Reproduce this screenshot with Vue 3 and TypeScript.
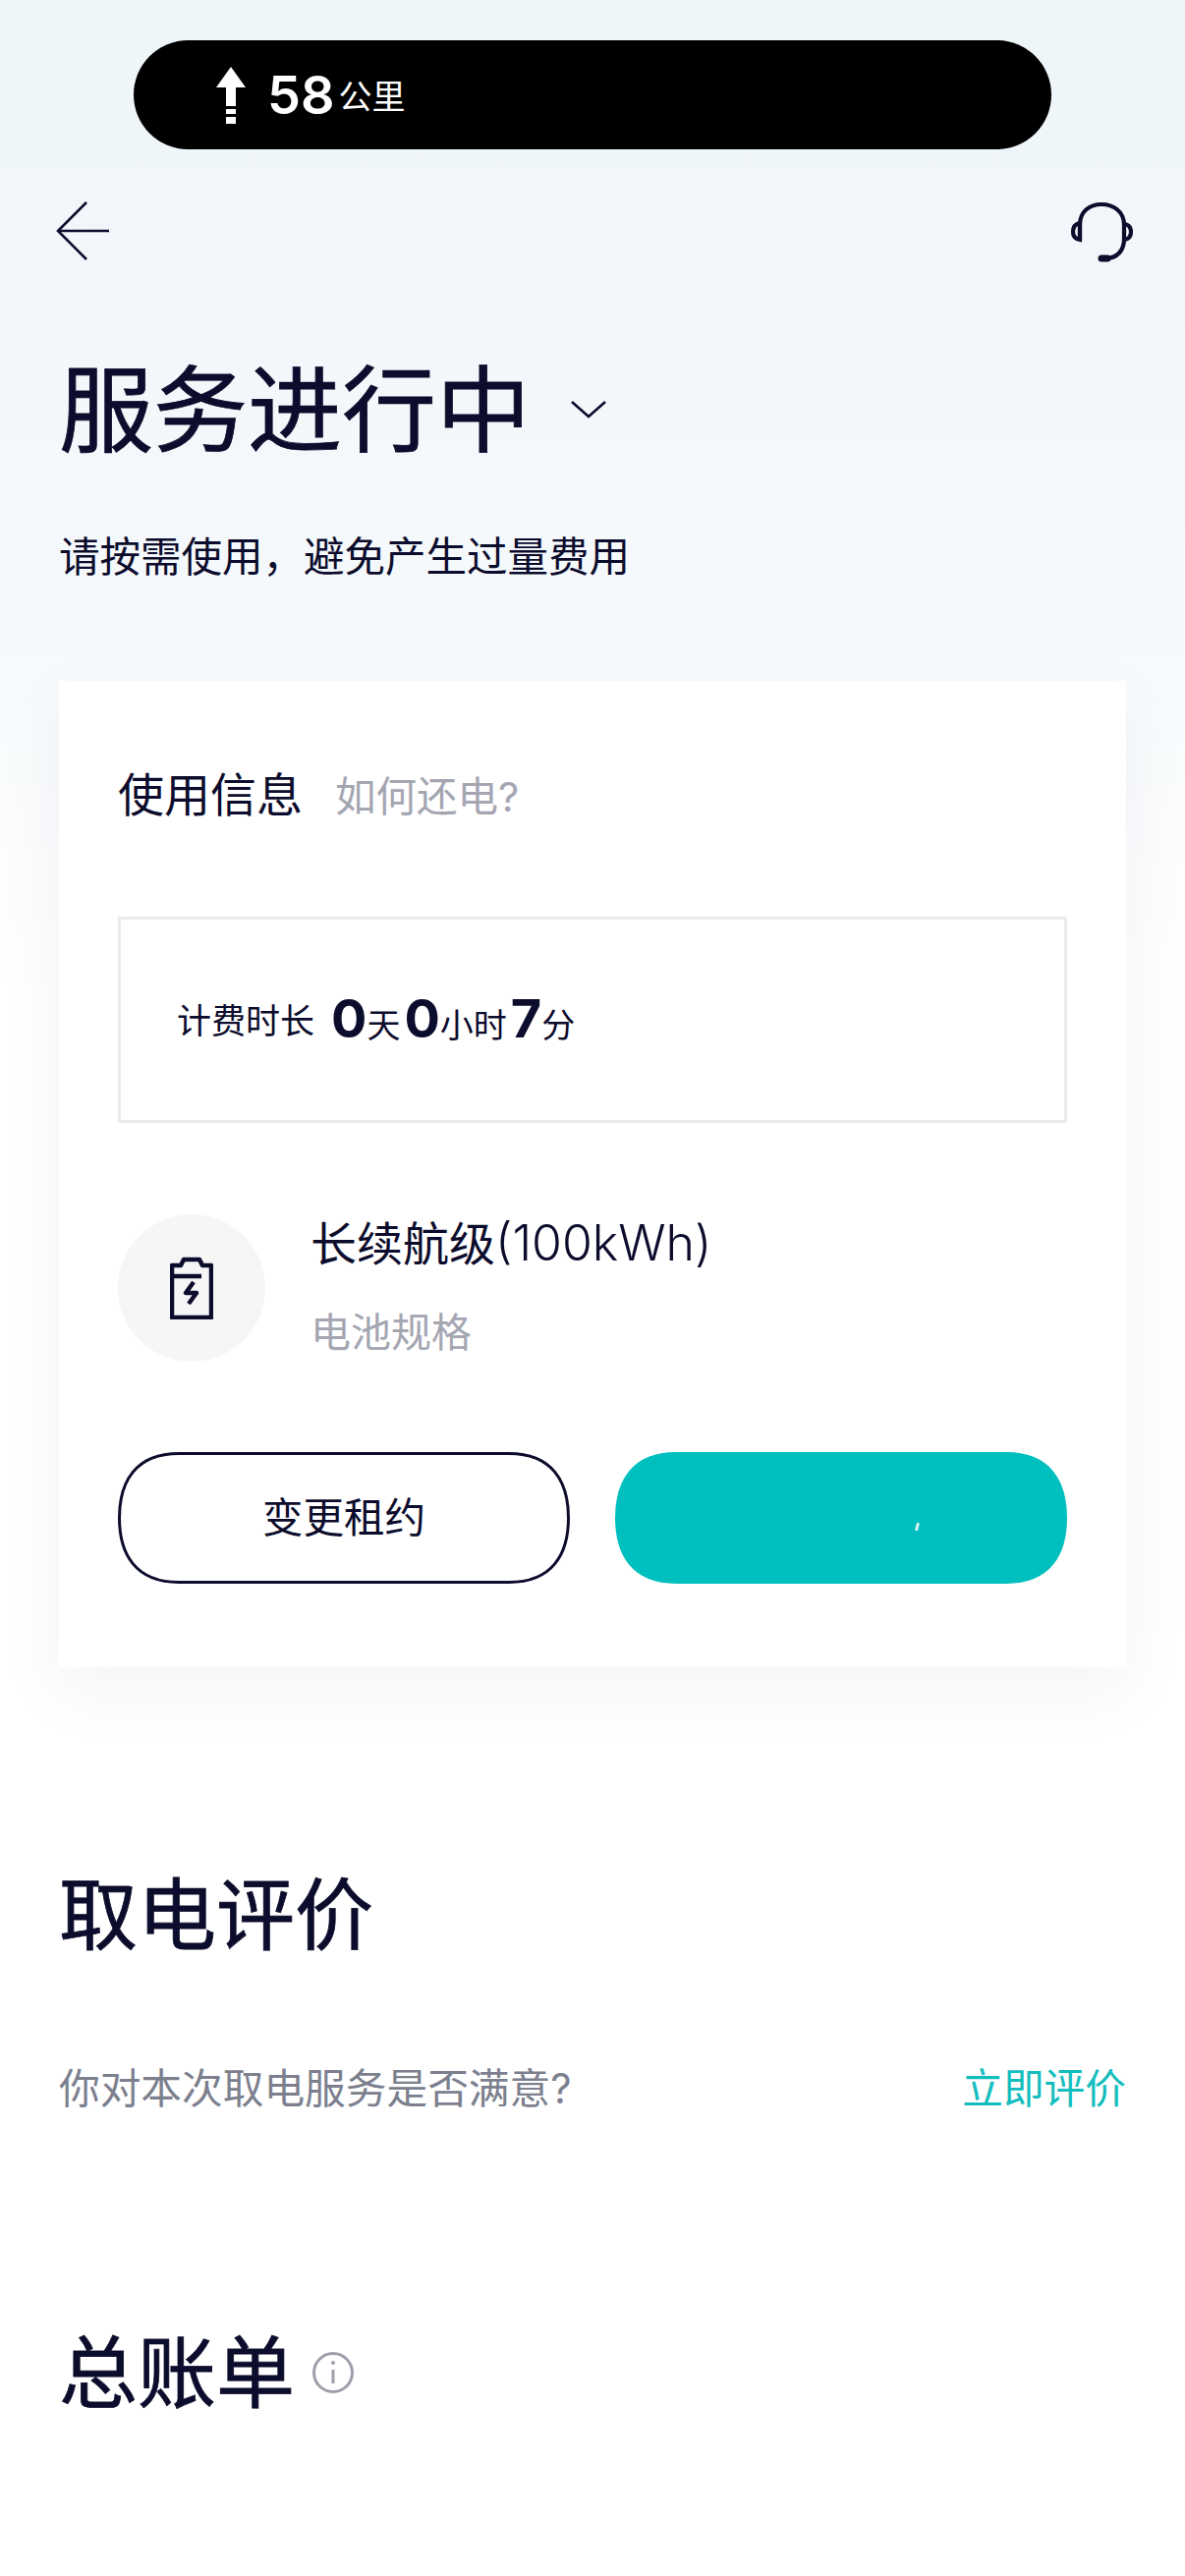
<script setup lang="ts">
// billing duration parts: value + unit
const duration = [
  { value: 0, unit: "天" },
  { value: 0, unit: "小时" },
  { value: 7, unit: "分" },
];

// squircle outline shared by the two action buttons
const btnPath =
  "M62 1.5H398C442 1.5 458.5 30 458.5 67C458.5 104 442 132.5 398 132.5H62C18 132.5 1.5 104 1.5 67C1.5 30 18 1.5 62 1.5Z";
</script>

<template>
  <div class="page">
    <div class="nav-pill">
      <svg class="nav-arrow" width="32" height="58" viewBox="0 0 32 58">
        <path d="M16 0L31 21H21V40H11V21H1Z" fill="#fff" />
        <rect x="11" y="43" width="10" height="5" fill="#fff" />
        <rect x="11" y="51" width="10" height="7" fill="#fff" />
      </svg>
      <span class="nav-num">58</span>
      <span class="nav-unit">公里</span>
    </div>

    <div class="top-bar">
      <svg width="54" height="60" viewBox="0 0 54 60" fill="none" stroke="#0c0c2c" stroke-width="2.6">
        <path d="M31 1L2 30L31 59" />
        <path d="M2 30H54" />
      </svg>
      <svg width="64" height="62" viewBox="0 0 64 62" fill="none" stroke="#0c0c2c" stroke-width="4.2">
        <path d="M10 39V24C10 10 20 3 32 3C44 3 55 10 55 24V38C55 50 48 58 36 58" />
        <path d="M10 22C5 23 3 27 3 31C3 35 5 38 10 39Z" />
        <path d="M56 23C60 24 62 27 62 31C62 35 60 38 56 39" />
        <path d="M32 58H38" stroke-width="7" stroke-linecap="round" />
      </svg>
    </div>

    <div class="status">
      <h1 class="title">服务进行中</h1>
      <svg width="36" height="18" viewBox="0 0 36 18" fill="none" stroke="#0c0c2c" stroke-width="2.6">
        <path d="M1 1L18 16L35 1" />
      </svg>
    </div>
    <p class="subtitle">请按需使用，避免产生过量费用</p>

    <section class="card">
      <div class="card-head">
        <span class="card-title">使用信息</span>
        <span class="card-link">如何还电?</span>
      </div>

      <div class="duration-box">
        <span class="duration-label">计费时长</span>
        <span class="duration-values">
          <template v-for="(part, index) in duration" :key="index">
            <b class="duration-num">{{ part.value }}</b><span class="duration-unit">{{ part.unit }}</span>
          </template>
        </span>
      </div>

      <div class="battery-row">
        <div class="battery-icon">
          <svg width="44" height="64" viewBox="0 0 44 64" fill="none" stroke="#0c0c2c" stroke-width="4.5" stroke-linejoin="round">
            <path d="M2 62V9H11L14 3H30L33 9H42V62Z" />
            <path d="M3 20H32" />
            <path d="M24 26L16 37H27L19 48" stroke-width="4.5" />
          </svg>
        </div>
        <div class="battery-text">
          <div class="battery-name">长续航级<span class="battery-spec">(100kWh)</span></div>
          <div class="battery-desc">电池规格</div>
        </div>
      </div>

      <div class="actions">
        <button class="btn">
          <svg class="btn-shape" width="460" height="134" viewBox="0 0 460 134">
            <path :d="btnPath" fill="#fff" stroke="#0c0c2c" stroke-width="3" />
          </svg>
          <span class="btn-label">变更租约</span>
        </button>
        <button class="btn">
          <svg class="btn-shape" width="460" height="134" viewBox="0 0 460 134">
            <path :d="btnPath" fill="#00bfbf" stroke="#00bfbf" stroke-width="3" />
          </svg>
          <i class="btn-speck"></i>
        </button>
      </div>
    </section>

    <h2 class="section-title rate-title">取电评价</h2>
    <div class="rate-row">
      <span class="rate-question">你对本次取电服务是否满意?</span>
      <span class="rate-link">立即评价</span>
    </div>

    <div class="bill-head">
      <h2 class="section-title">总账单</h2>
      <svg width="44" height="44" viewBox="0 0 44 44" fill="none" stroke="#9d9fab" stroke-width="3">
        <circle cx="22" cy="22" r="19.5" />
        <path d="M22 19V33" />
        <circle cx="22" cy="12" r="2" fill="#9d9fab" stroke="none" />
      </svg>
    </div>
  </div>
</template>

<style scoped>
.page {
  width: 1206px;
  height: 2622px;
  box-sizing: border-box;
  padding: 41px 60px 0;
  overflow: hidden;
  color: #0c0c2c;
  font-family: Inter, "Noto Sans CJK SC", sans-serif;
  background: linear-gradient(180deg, #eef5f9 0, #f5f9fc 600px, #ffffff 1000px);
}

.nav-pill {
  width: 934px;
  height: 111px;
  margin-left: 76px;
  padding-left: 83px;
  box-sizing: border-box;
  display: flex;
  align-items: center;
  background: #000;
  border-radius: 56px;
  color: #fff;
}
.nav-arrow {
  margin-right: 21px;
}
.nav-num {
  font-size: 54px;
  font-weight: 600;
  line-height: 60px;
}
.nav-unit {
  font-size: 34px;
  margin-left: 4px;
  line-height: 40px;
  margin-top: 4px;
}

.top-bar {
  display: flex;
  justify-content: space-between;
  align-items: flex-start;
  margin: 53px -7px 0 -3px;
}

.status {
  display: flex;
  align-items: center;
  gap: 41px;
  margin-top: 90px;
}
.title {
  margin: 0;
  font-size: 96px;
  font-weight: 400;
  line-height: 120px;
  -webkit-text-stroke: 0.8px #0c0c2c;
}
.subtitle {
  margin: 60px 0 0;
  font-size: 41.5px;
  line-height: 60px;
}

.card {
  width: 1086px;
  height: 1004px;
  margin-top: 96px;
  padding: 0 60px;
  box-sizing: border-box;
  background: #fff;
  box-shadow: 0 24px 70px rgba(20, 30, 60, 0.05);
}
.card-head {
  display: flex;
  align-items: baseline;
  gap: 33px;
  padding-top: 84px;
  line-height: 64px;
}
.card-title {
  font-size: 47px;
}
.card-link {
  font-size: 41.5px;
  color: #a4a6b2;
}

.duration-box {
  height: 210px;
  margin-top: 90px;
  padding: 0 0 4px 57px;
  box-sizing: border-box;
  display: flex;
  align-items: center;
  border: 3px solid #ebebed;
}
.duration-label {
  font-size: 35px;
  margin-right: 17px;
}
.duration-values {
  display: flex;
  align-items: baseline;
}
.duration-num {
  font-size: 54px;
  font-weight: 700;
}
.duration-unit {
  font-size: 34px;
  margin-right: 4px;
}

.battery-row {
  display: flex;
  align-items: flex-start;
  gap: 46px;
  margin-top: 93px;
}
.battery-icon {
  width: 150px;
  height: 150px;
  display: flex;
  align-items: center;
  justify-content: center;
  border-radius: 50%;
  background: #f6f6f7;
}
.battery-text {
  margin-top: -1px;
}
.battery-name {
  font-size: 47px;
  line-height: 60px;
}
.battery-spec {
  font-size: 50px;
  font-weight: 300;
}
.battery-desc {
  margin-top: 30px;
  font-size: 41px;
  line-height: 60px;
  color: #a4a6b2;
}

.actions {
  display: flex;
  gap: 46px;
  margin-top: 92px;
}
.btn {
  position: relative;
  flex: 0 0 460px;
  height: 134px;
  padding: 0 0 7px;
  border: none;
  background: none;
  font-family: inherit;
  font-size: 41.5px;
  color: #0c0c2c;
}
.btn-shape {
  position: absolute;
  left: 0;
  top: 0;
}
.btn-label {
  position: relative;
}
.btn-speck {
  position: absolute;
  left: 306px;
  top: 72px;
  width: 3px;
  height: 8px;
  background: #d8f4f4;
  transform: rotate(15deg);
}

.section-title {
  margin: 0;
  font-size: 80px;
  font-weight: 400;
  line-height: 100px;
  -webkit-text-stroke: 0.8px #0c0c2c;
}
.rate-title {
  margin-top: 202px;
}
.rate-row {
  display: flex;
  justify-content: space-between;
  align-items: center;
  margin-top: 97px;
  font-size: 41.7px;
  line-height: 60px;
}
.rate-question {
  color: #7c7f8e;
}
.rate-link {
  color: #14bdbd;
}

.bill-head {
  display: flex;
  align-items: center;
  gap: 17px;
  margin-top: 209px;
}
</style>

<style>
html,
body {
  margin: 0;
  background: #fff;
}
</style>
